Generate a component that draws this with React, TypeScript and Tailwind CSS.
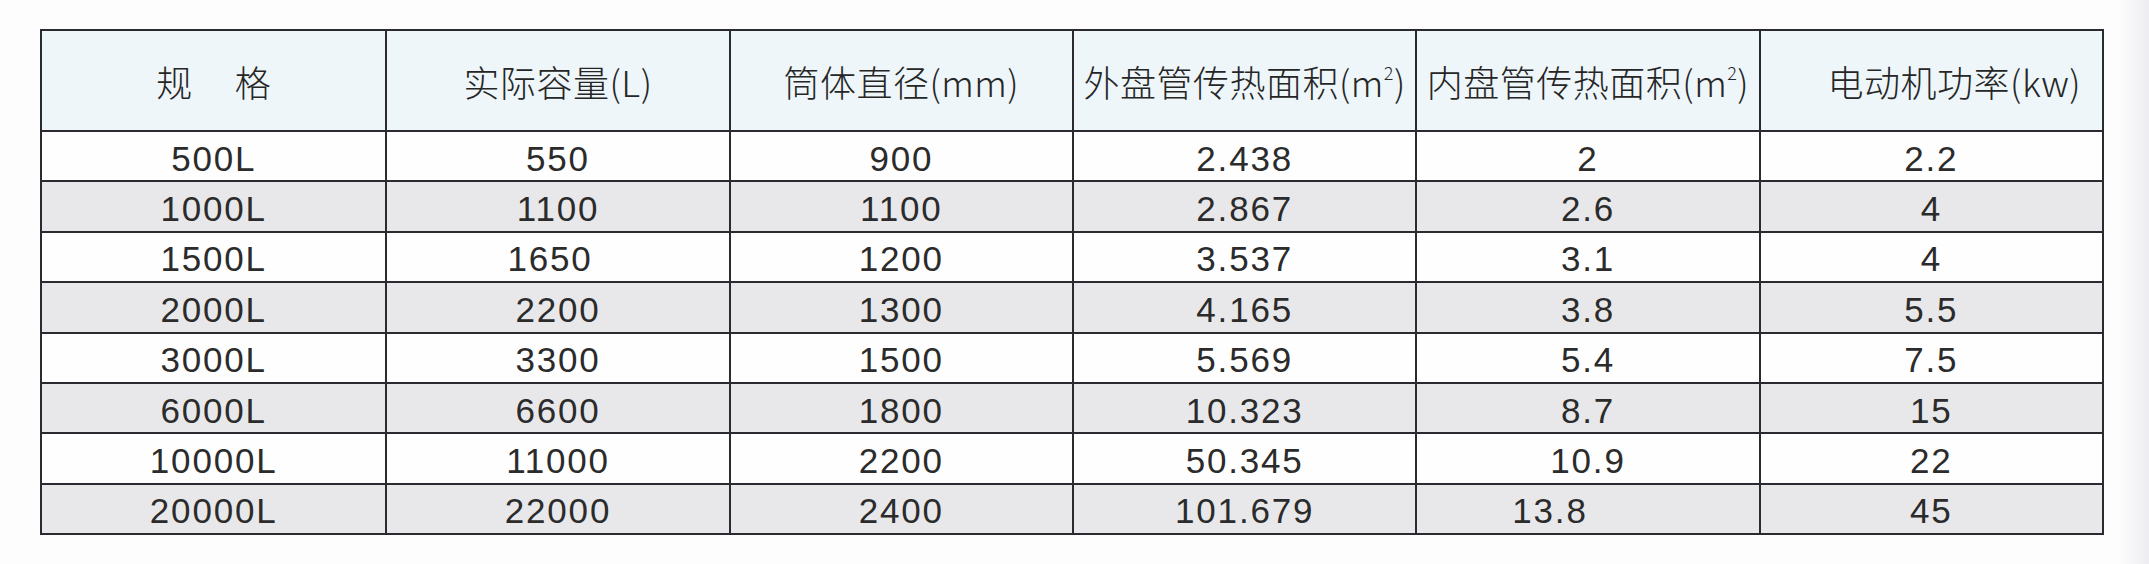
import React from "react";

type Cell = { v: string; dx?: number };

const rows: Cell[][] = [
  [{ v: "500L" }, { v: "550" }, { v: "900" }, { v: "2.438" }, { v: "2" }, { v: "2.2" }],
  [{ v: "1000L" }, { v: "1100" }, { v: "1100" }, { v: "2.867" }, { v: "2.6" }, { v: "4" }],
  [{ v: "1500L" }, { v: "1650", dx: -8 }, { v: "1200" }, { v: "3.537" }, { v: "3.1" }, { v: "4" }],
  [{ v: "2000L" }, { v: "2200" }, { v: "1300" }, { v: "4.165" }, { v: "3.8" }, { v: "5.5" }],
  [{ v: "3000L" }, { v: "3300" }, { v: "1500" }, { v: "5.569" }, { v: "5.4" }, { v: "7.5" }],
  [{ v: "6000L" }, { v: "6600" }, { v: "1800" }, { v: "10.323" }, { v: "8.7" }, { v: "15" }],
  [{ v: "10000L" }, { v: "11000" }, { v: "2200" }, { v: "50.345" }, { v: "10.9" }, { v: "22" }],
  [{ v: "20000L" }, { v: "22000" }, { v: "2400" }, { v: "101.679" }, { v: "13.8", dx: -38 }, { v: "45" }],
];

const cjk = { fontFamily: '"Noto Sans CJK SC", "Noto Sans", sans-serif' };
const lat = { fontFamily: '"Liberation Sans", Arial, sans-serif' };

function Sup() {
  return <sup className="text-[18px] top-[-0.9em]">2</sup>;
}

export default function App() {
  return (
    <div className="w-[2149px] h-[564px] bg-[linear-gradient(to_right,#fdfdfd_2118px,#ededf1_2149px)] pl-[40px] pt-[29px]">
      <div className="w-[2064px] border-2 border-[#2a2a30]">
        <div
          className="grid grid-cols-6 h-[99px] bg-[#eef6fa] text-[36px] tracking-[0.5px] font-light text-[#262626] leading-none"
          style={cjk}
        >
          <div className="flex items-center justify-center gap-[42px]">
            <span>规</span>
            <span>格</span>
          </div>
          <div className="flex items-center justify-center border-l-2 border-[#2a2a30]">
            <span>实际容量(L)</span>
          </div>
          <div className="flex items-center justify-center border-l-2 border-[#2a2a30]">
            <span>筒体直径(mm)</span>
          </div>
          <div className="flex items-center justify-center border-l-2 border-[#2a2a30]">
            <span>
              外盘管传热面积(m<Sup />)
            </span>
          </div>
          <div className="flex items-center justify-center border-l-2 border-[#2a2a30]">
            <span>
              内盘管传热面积(m<Sup />)
            </span>
          </div>
          <div className="flex items-center justify-center border-l-2 border-[#2a2a30] pl-[46px]">
            <span>电动机功率(kw)</span>
          </div>
        </div>
        {rows.map((r, i) => (
          <div
            key={i}
            className={
              "grid grid-cols-6 h-[50.4px] border-t-2 border-[#2a2a30] text-[35px] tracking-[1.8px] text-[#2b2b2b] leading-none " +
              (i % 2 === 1 ? "bg-[#e8e8ea]" : "bg-[#fefefe]")
            }
            style={lat}
          >
            {r.map((c, j) => (
              <div
                key={j}
                className={
                  "flex items-center justify-center pt-[4px] " +
                  (j > 0 ? "border-l-2 border-[#2a2a30]" : "")
                }
              >
                <span style={c.dx ? { marginLeft: c.dx * 2 } : undefined}>{c.v}</span>
              </div>
            ))}
          </div>
        ))}
      </div>
    </div>
  );
}
